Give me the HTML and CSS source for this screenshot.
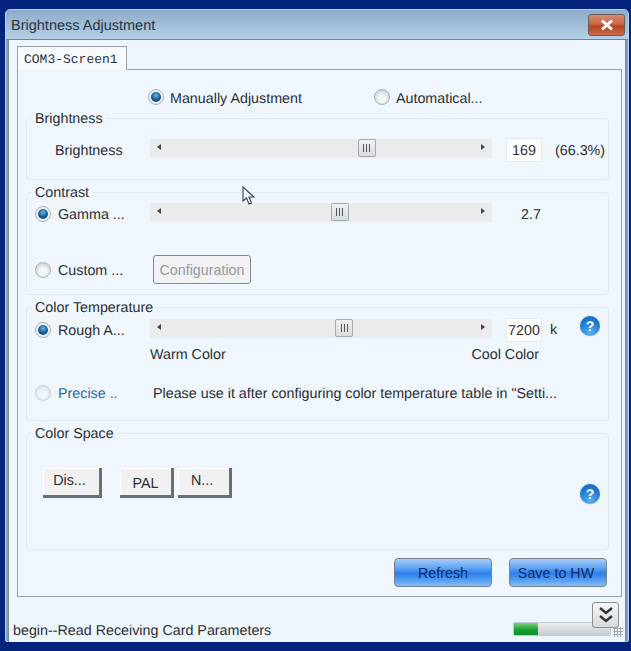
FILE: index.html
```html
<!DOCTYPE html>
<html lang="en">
<head>
    <meta charset="UTF-8">
    <title>Brightness Adjustment</title>
    <link rel="stylesheet" href="styles.css">
</head>
<body>
    <div class="window">
        <div class="titlebar">
            <span class="title">Brightness Adjustment</span>
            <button class="close" aria-label="Close">
                <svg width="14" height="12" viewBox="0 0 14 12"><path d="M2 1.5 L12 10.5 M12 1.5 L2 10.5" stroke="#fff" stroke-width="3" fill="none"/></svg>
            </button>
        </div>

        <div class="client">
            <div class="tab">COM3-Screen1</div>
            <div class="panel">
                <div class="mode-row">
                    <span class="radio on"></span>
                    <span class="mode-label">Manually Adjustment</span>
                    <span class="radio mode-second"></span>
                    <span class="mode-label">Automatical...</span>
                </div>

                <fieldset class="group group-brightness">
                    <legend>Brightness</legend>
                    <div class="row">
                        <div class="lead lead-plain"><span class="lbl">Brightness</span></div>
                        <div class="slider">
                            <i class="arrow-left"></i>
                            <i class="thumb" style="left: 60.8%"><b></b><b></b><b></b></i>
                            <i class="arrow-right"></i>
                        </div>
                        <div class="num">169</div>
                        <span class="percent">(66.3%)</span>
                    </div>
                </fieldset>

                <fieldset class="group group-contrast">
                    <legend>Contrast</legend>
                    <div class="row">
                        <div class="lead"><span class="radio on"></span><span class="lbl">Gamma ...</span></div>
                        <div class="slider">
                            <i class="arrow-left"></i>
                            <i class="thumb" style="left: 52.9%"><b></b><b></b><b></b></i>
                            <i class="arrow-right"></i>
                        </div>
                        <span class="gamma">2.7</span>
                    </div>
                    <div class="row row-custom">
                        <div class="lead"><span class="radio"></span><span class="lbl">Custom ...</span></div>
                        <button class="config">Configuration</button>
                    </div>
                </fieldset>

                <fieldset class="group group-temp">
                    <legend>Color Temperature</legend>
                    <div class="row">
                        <div class="lead"><span class="radio on"></span><span class="lbl">Rough A...</span></div>
                        <div class="slider">
                            <i class="arrow-left"></i>
                            <i class="thumb" style="left: 54.1%"><b></b><b></b><b></b></i>
                            <i class="arrow-right"></i>
                        </div>
                        <div class="num">7200</div>
                        <span class="unit">k</span>
                        <span class="help help-top">?</span>
                    </div>
                    <div class="scale-labels">
                        <span>Warm Color</span>
                        <span>Cool Color</span>
                    </div>
                    <div class="row row-precise">
                        <div class="lead lead-blue"><span class="radio off"></span><span class="lbl">Precise ..</span></div>
                        <span class="hint">Please use it after configuring color temperature table in "Setti...</span>
                    </div>
                </fieldset>

                <fieldset class="group group-space">
                    <legend>Color Space</legend>
                    <div class="space-row">
                        <button class="raised raised-dis">Dis...</button>
                        <button class="raised raised-pal">PAL</button>
                        <button class="raised raised-n">N...</button>
                        <span class="help help-bottom">?</span>
                    </div>
                </fieldset>

                <div class="actions">
                    <button class="blue">Refresh</button>
                    <button class="blue blue-save">Save to HW</button>
                </div>
            </div>

            <div class="footer">
                <span class="status">begin--Read Receiving Card Parameters</span>
                <div class="progress"><div class="progress-fill" style="width: 25%"></div></div>
                <button class="expand" aria-label="Expand">
                    <svg width="18" height="18" viewBox="0 0 18 18"><path d="M3 2 L9 7 L15 2 M3 10 L9 15 L15 10" stroke="#333" stroke-width="2.4" fill="none"/></svg>
                </button>
                <div class="grip"></div>
            </div>
        </div>

        <svg class="cursor" width="14" height="20" viewBox="0 0 14 20"><path d="M1 1 L1 15 L4.5 12 L7 18 L9.5 17 L7 11 L12 11 Z" fill="#f4f8fc" stroke="#3a4450" stroke-width="1.1"/></svg>
    </div>
</body>
</html>
```

FILE: styles.css
```css
* {
    box-sizing: border-box;
}

body {
    margin: 0;
    width: 631px;
    height: 651px;
    padding: 9px 2px 9px 5px;
    overflow: hidden;
    background-color: #03237c;
    font-family: "Liberation Sans", Arial, sans-serif;
    font-size: 14.3px;
    text-rendering: geometricPrecision;
    color: #2b2f33;
}

button {
    font-family: inherit;
    font-size: 14.3px;
    padding: 0;
}

.window {
    position: relative;
    width: 624px;
    height: 633px;
    background-color: #7f9fbd;
    border: 1px solid #b9d3e6;
    border-radius: 5px 5px 2px 2px;
}

.titlebar {
    display: flex;
    align-items: center;
    justify-content: space-between;
    height: 30px;
    padding: 0 3px 0 5px;
    background: linear-gradient(#8dabc8, #b5cfe7);
    border-bottom: 1px solid #6f8192;
    border-radius: 4px 4px 0 0;
}

.title {
    padding-top: 2px;
    font-size: 14.5px;
    color: #263542;
}

.close {
    display: flex;
    align-items: center;
    justify-content: center;
    width: 37px;
    height: 22px;
    border: 1px solid #6d5a58;
    border-radius: 3px;
    background: linear-gradient(#d88a70 0%, #c8684c 45%, #b8421f 55%, #cb6a4a 100%);
}

.client {
    height: 602px;
    margin: 0 2px 0 2px;
    padding: 6px 0 0 8px;
    background-color: #eef6fd;
    border-left: 1px solid #7b8794;
    border-right: 1px solid #7b8794;
}

.tab {
    position: relative;
    width: 110px;
    height: 24px;
    margin-bottom: -1px;
    padding: 5px 0 0 6px;
    background-color: #f6fafe;
    border: 1px solid #9aa3aa;
    border-bottom: none;
    font-family: "Liberation Mono", monospace;
    font-size: 13px;
    color: #30343a;
}

.panel {
    width: 605px;
    height: 528px;
    padding: 0 12px 0 8px;
    background-color: #eff6fd;
    border: 1px solid #9aa3aa;
}

.mode-row {
    display: flex;
    align-items: center;
    height: 16px;
    margin: 19px 0 5px 122px;
}

.mode-label {
    margin-left: 6px;
    padding-top: 3px;
    line-height: 16px;
}

.mode-second {
    margin-left: 72px;
}

.group {
    margin: 0 0 4px;
    padding: 0;
    min-width: 0;
    border: 1px solid #e1e9f1;
    border-radius: 4px;
}

.group legend {
    height: 16px;
    margin-left: 5px;
    padding: 0 3px;
    line-height: 18px;
    font-size: 14.3px;
}

.group-brightness {
    height: 70px;
}

.group-brightness .row {
    padding-top: 12px;
}

.group-contrast {
    height: 111px;
}

.group-contrast .row:first-of-type {
    padding-top: 2px;
}

.group-temp {
    height: 122px;
}

.group-temp .row:first-of-type {
    padding-top: 3px;
}

.group-space {
    height: 125px;
}

.row {
    display: flex;
    align-items: flex-start;
}

.lead {
    display: flex;
    align-items: center;
    flex: none;
    width: 123px;
    height: 24px;
    padding-left: 8px;
    gap: 7px;
}

.lbl {
    padding-top: 2px;
}

.lead-plain {
    padding-left: 28px;
}

.lead-blue {
    color: #2f6aa6;
}

.row-custom {
    margin-top: 27px;
    align-items: center;
}

.row-precise {
    align-items: center;
    height: 16px;
    margin-top: 22px;
}

.radio {
    position: relative;
    flex: none;
    display: inline-block;
    width: 16px;
    height: 16px;
    border: 1px solid #a9b2bb;
    border-radius: 50%;
    background: radial-gradient(circle at 50% 60%, #f4f6f8 30%, #c9cdd1 85%);
}

.radio.on {
    background: #eaf1f8;
}

.radio.on::after {
    content: "";
    position: absolute;
    left: 2px;
    top: 2px;
    width: 10px;
    height: 10px;
    border-radius: 50%;
    background: radial-gradient(circle at 50% 35%, #6fb4e0 0%, #1a5f97 50%, #0b3560 100%);
}

.radio.off {
    opacity: 0.55;
}

.slider {
    position: relative;
    flex: none;
    width: 342px;
    height: 19px;
    margin-top: 1px;
    background-color: #e9ebec;
}

.arrow-left,
.arrow-right {
    position: absolute;
    top: 5px;
    width: 0;
    height: 0;
    border-top: 3px solid transparent;
    border-bottom: 3px solid transparent;
}

.arrow-left {
    left: 7px;
    border-right: 4px solid #444;
}

.arrow-right {
    right: 7px;
    border-left: 4px solid #444;
}

.thumb {
    position: absolute;
    top: 0;
    display: flex;
    align-items: center;
    justify-content: center;
    gap: 2px;
    width: 18px;
    height: 18px;
    background: linear-gradient(#eef0f2, #d9dcdf);
    border: 1px solid #a3a8ad;
    border-radius: 2px;
}

.thumb b {
    width: 1px;
    height: 8px;
    background-color: #555;
}

.num {
    flex: none;
    width: 36px;
    height: 24px;
    margin-left: 14px;
    padding-top: 4px;
    text-align: center;
    line-height: 16px;
    background-color: #fff;
    border: 1px solid #e4e9ee;
}

.percent {
    margin-left: 13px;
    line-height: 26px;
}

.gamma {
    margin-left: 29px;
    line-height: 26px;
}

.unit {
    margin-left: 8px;
    line-height: 24px;
}

.config {
    width: 98px;
    height: 29px;
    margin-left: 3px;
    color: #969a9e;
    background-color: #f1f2f4;
    border: 1px solid #83888e;
    border-radius: 3px;
}

.help {
    display: flex;
    align-items: center;
    justify-content: center;
    width: 20px;
    height: 20px;
    margin-left: auto;
    margin-right: 8px;
    border-radius: 50%;
    background: radial-gradient(circle at 50% 85%, #5fb0ee 0%, #1f78cf 60%, #1466bb 100%);
    color: #fff;
    font-weight: bold;
    font-size: 14px;
    box-shadow: 0 0 1px #7fb4e4;
}

.help-top {
    margin-top: -2px;
}

.scale-labels {
    display: flex;
    justify-content: space-between;
    width: 389px;
    margin: 5px 0 0 123px;
    line-height: 16px;
}

.hint {
    margin-left: 3px;
    padding-top: 2px;
    white-space: nowrap;
}

.space-row {
    display: flex;
    align-items: flex-start;
    height: 36px;
    margin-top: 27px;
    padding-left: 16px;
}

.raised {
    height: 30px;
    padding-bottom: 3px;
    color: #2b2f33;
    background-color: #f1f1f1;
    border: none;
    border-right: 3px solid #6c6f72;
    border-bottom: 3px solid #6c6f72;
    box-shadow: inset 1px 1px 0 #fff;
}

.raised-dis {
    width: 59px;
    padding-right: 3px;
}

.raised-pal {
    width: 54px;
    margin-left: 18px;
    padding: 3px 0 0;
}

.raised-n {
    width: 54px;
    margin-left: 4px;
    padding-right: 3px;
}

.help-bottom {
    align-self: flex-end;
}

.actions {
    display: flex;
    justify-content: flex-end;
    gap: 17px;
    margin-top: 8px;
    padding-right: 2px;
}

.blue {
    width: 98px;
    height: 29px;
    color: #0d2b63;
    font-size: 14.3px;
    background: linear-gradient(#a9ccf7 0%, #5aa2f4 35%, #2d7fea 52%, #4d9af2 75%, #86bdf7 100%);
    border: 1px solid #75818e;
    border-radius: 4px;
}

.blue-save {
    padding-right: 4px;
}

.footer {
    position: relative;
    display: flex;
    align-items: center;
    height: 45px;
    padding-top: 22px;
}

.status {
    margin-left: -4px;
}

.progress {
    position: absolute;
    left: 496px;
    top: 25px;
    width: 98px;
    height: 14px;
    background: linear-gradient(#eceeef, #c9ccce);
    border: 1px solid #c3c8cc;
    border-radius: 2px;
}

.progress-fill {
    height: 100%;
    background: linear-gradient(#7fcf7c, #18a336 55%, #108a2b);
}

.expand {
    position: absolute;
    left: 575px;
    top: 5px;
    display: flex;
    align-items: center;
    justify-content: center;
    width: 27px;
    height: 26px;
    background: linear-gradient(#f5f6f7, #d8dadc);
    border: 1px solid #8a8f94;
    border-radius: 3px;
}

.grip {
    position: absolute;
    left: 596px;
    top: 30px;
    width: 10px;
    height: 10px;
    background-image: radial-gradient(circle, #a5aaae 1px, transparent 1.2px);
    background-size: 3px 3px;
}

.cursor {
    position: absolute;
    left: 236px;
    top: 176px;
}
```
